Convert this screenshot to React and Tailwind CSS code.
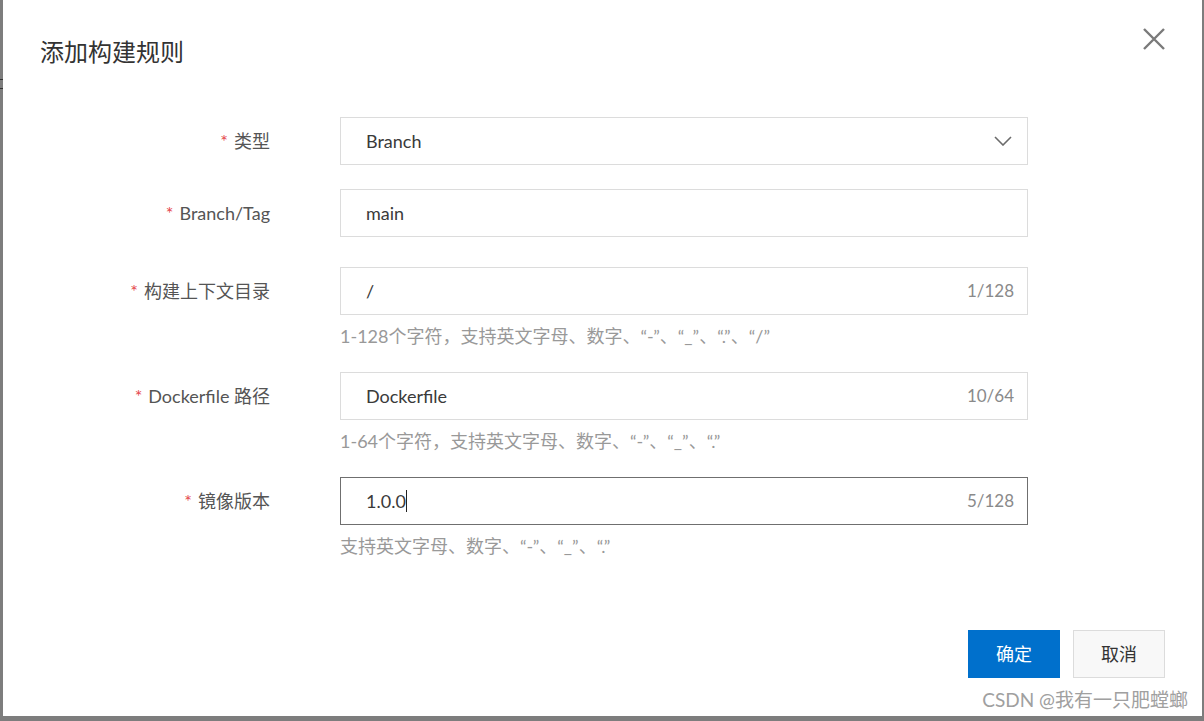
import React from 'react';

const font = { fontFamily: 'Lato, "Noto Sans CJK SC", sans-serif' };

function Label({ children }) {
  return (
    <div className="w-[267px] h-12 flex items-center justify-end text-[18px] text-[#555]">
      <span className="text-[#e5484d] mr-1.5">*</span>
      {children}
    </div>
  );
}

function Field({ label, value, count, help, focused, select, className = '' }) {
  return (
    <div className={`flex ${className}`}>
      <Label>{label}</Label>
      <div className="ml-[70px] w-[688px]">
        <div
          className={`h-12 border flex items-center pl-[25px] pr-[13px] text-[18px] text-[#3a3a3a] bg-white ${
            focused ? 'border-[#6f6f6f]' : 'border-[#dcdcdc]'
          }`}
        >
          <span className="flex-1 flex items-center">
            {value}
            {focused && <span className="inline-block w-px h-[22px] bg-[#222]" />}
          </span>
          {count && <span className="text-[17px] text-[#8a8a8a]">{count}</span>}
          {select && (
            <svg width="18" height="10" viewBox="0 0 18 10" className="mr-0.5">
              <path d="M1 1l8 8 8-8" fill="none" stroke="#6b6b6b" strokeWidth="1.6" />
            </svg>
          )}
        </div>
        {help && <div className="mt-2 h-[26px] leading-[26px] text-[18px] text-[#999]">{help}</div>}
      </div>
    </div>
  );
}

export default function App() {
  return (
    <div className="w-[1204px] h-[721px] bg-[#7d7d7d] flex flex-col overflow-hidden" style={font}>
      <div className="flex flex-1">
        {/* left strip */}
        <div className="w-[3px] flex flex-col">
          <div className="h-[79px]" />
          <div className="h-px bg-[#333]" />
          <div className="h-2" />
          <div className="h-px bg-[#333]" />
        </div>
        {/* dialog */}
        <div className="relative flex-1 mr-[2px] bg-white flex flex-col">
          <div className="flex items-start justify-between pl-[37px] pr-[37px] pt-[37px] h-[117px]">
            <h1 className="text-[24px] leading-[30px] text-[#333]">添加构建规则</h1>
            <svg width="22" height="22" viewBox="0 0 22 22" className="-mt-[9px]">
              <path d="M1 1l20 20M21 1L1 21" stroke="#7a7a7a" strokeWidth="2.4" />
            </svg>
          </div>

          <div className="flex flex-col">
            <Field label="类型" value="Branch" select />
            <Field label="Branch/Tag" value="main" className="mt-6" />
            <Field
              label="构建上下文目录"
              value="/"
              count="1/128"
              help="1-128个字符，支持英文字母、数字、“-”、“_”、“.”、“/”"
              className="mt-[30px]"
            />
            <Field
              label="Dockerfile 路径"
              value="Dockerfile"
              count="10/64"
              help="1-64个字符，支持英文字母、数字、“-”、“_”、“.”"
              className="mt-[23px]"
            />
            <Field
              label="镜像版本"
              value="1.0.0"
              count="5/128"
              focused
              help="支持英文字母、数字、“-”、“_”、“.”"
              className="mt-[23px]"
            />
          </div>

          <div className="mt-[71px] flex justify-end gap-[13px] pr-[37px]">
            <button className="w-[92px] h-12 bg-[#0070cc] text-white text-[18px]">确定</button>
            <button className="w-[92px] h-12 bg-[#f8f8f8] border border-[#dcdcdc] text-[#333] text-[18px]">
              取消
            </button>
          </div>

          <div
            className="absolute right-[14px] bottom-[3px] text-[19px] text-[#a0a0a0] leading-[26px]"
            style={{ textShadow: '0 0 1px #fff' }}
          >
            CSDN @我有一只肥螳螂
          </div>
        </div>
      </div>
      <div className="h-[5px]" />
    </div>
  );
}
